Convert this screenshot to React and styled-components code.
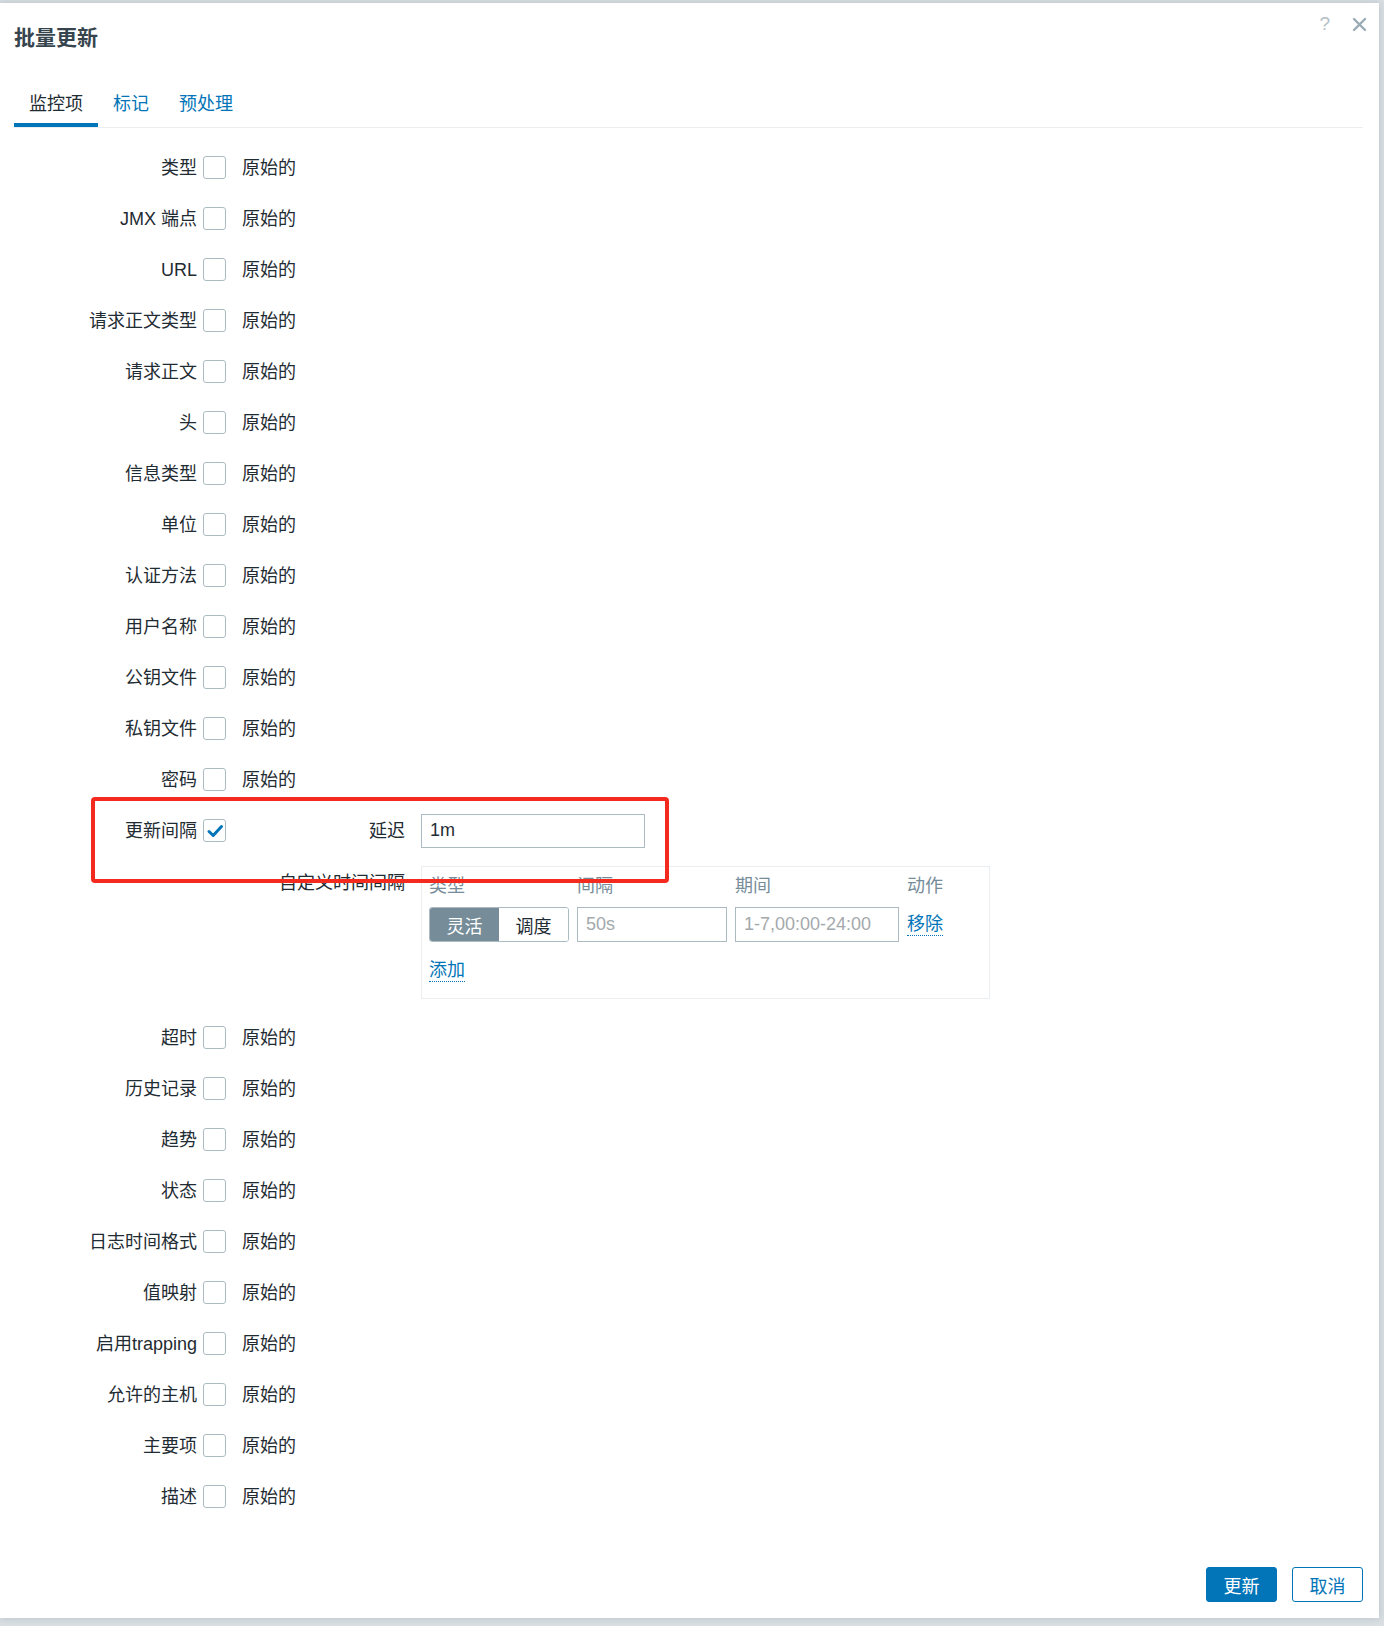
import React from 'react';
import styled, { createGlobalStyle } from 'styled-components';

const GlobalStyle = createGlobalStyle`
  html, body {
    margin: 0;
    padding: 0;
  }
  body {
    background: #d9dfe3;
    font-family: "Liberation Sans", "Noto Sans CJK SC", sans-serif;
    color: #1f2c33;
    min-height: 1626px;
  }
`;

const topFields = [
  '类型',
  'JMX 端点',
  'URL',
  '请求正文类型',
  '请求正文',
  '头',
  '信息类型',
  '单位',
  '认证方法',
  '用户名称',
  '公钥文件',
  '私钥文件',
  '密码',
];

const bottomFields = [
  '超时',
  '历史记录',
  '趋势',
  '状态',
  '日志时间格式',
  '值映射',
  '启用trapping',
  '允许的主机',
  '主要项',
  '描述',
];

export default function App() {
  return (
    <>
      <GlobalStyle />
      <Dialog>
        <HeadTools>
          <HelpMark>?</HelpMark>
          <CloseBtn aria-label="close">
            <svg width="15" height="15" viewBox="0 0 15 15">
              <path d="M2 2 L13 13 M13 2 L2 13" stroke="#9aabb5" strokeWidth="2.4" strokeLinecap="round" />
            </svg>
          </CloseBtn>
        </HeadTools>
        <Title>批量更新</Title>

        <TabList>
          <Tab active>监控项</Tab>
          <Tab>标记</Tab>
          <Tab>预处理</Tab>
        </TabList>

        <Form>
          {topFields.map((name) => (
            <FieldRow key={name}>
              <Label>{name}</Label>
              <Checkbox />
              <Value>原始的</Value>
            </FieldRow>
          ))}

          <UpdateRow>
            <LabelCell>
              <Label>更新间隔</Label>
            </LabelCell>
            <LabelCell>
              <Checkbox checked>
                <svg width="18" height="18" viewBox="0 0 18 18">
                  <path d="M3 9.5 L7.2 13.5 L15.5 4.5" fill="none" stroke="#0275b8" strokeWidth="3" strokeLinecap="round" strokeLinejoin="round" />
                </svg>
              </Checkbox>
            </LabelCell>
            <SubGrid>
              <SubLabel>延迟</SubLabel>
              <DelayInput defaultValue="1m" />
              <SubLabel top>自定义时间间隔</SubLabel>
              <IntervalBox>
                <IntervalGrid>
                  <ColHead>类型</ColHead>
                  <ColHead>间隔</ColHead>
                  <ColHead>期间</ColHead>
                  <ColHead>动作</ColHead>
                  <Segmented>
                    <Segment active>灵活</Segment>
                    <Segment>调度</Segment>
                  </Segmented>
                  <TextInput placeholder="50s" />
                  <TextInput placeholder="1-7,00:00-24:00" />
                  <LinkCell>
                    <LinkText>移除</LinkText>
                  </LinkCell>
                </IntervalGrid>
                <AddLine>
                  <LinkText>添加</LinkText>
                </AddLine>
              </IntervalBox>
            </SubGrid>
          </UpdateRow>

          {bottomFields.map((name) => (
            <FieldRow key={name}>
              <Label>{name}</Label>
              <Checkbox />
              <Value>原始的</Value>
            </FieldRow>
          ))}
        </Form>

        <Footer>
          <Button primary>更新</Button>
          <Button>取消</Button>
        </Footer>

        <Highlight />
      </Dialog>
    </>
  );
}

const Dialog = styled.div`
  position: relative;
  box-sizing: border-box;
  width: 1379px;
  margin-top: 3px;
  padding: 0 16px 16px 14px;
  background: #fff;
  box-shadow: 0 0 8px rgba(40, 60, 70, 0.18);
`;

const HeadTools = styled.div`
  position: absolute;
  top: 12px;
  right: 12px;
  display: flex;
  align-items: center;
  gap: 22px;
`;

const HelpMark = styled.span`
  font-size: 19px;
  line-height: 18px;
  color: #b3bfc6;
`;

const CloseBtn = styled.span`
  display: flex;
  width: 15px;
  height: 15px;
  margin-top: 1px;
`;

const Title = styled.h1`
  margin: 0;
  padding-top: 22px;
  font-size: 21px;
  line-height: 26px;
  font-weight: 700;
  color: #36444e;
`;

const TabList = styled.div`
  display: flex;
  margin-top: 41px;
  border-bottom: 1px solid #ebeef0;
`;

const Tab = styled.div`
  padding: 0 15px 7px;
  font-size: 18px;
  line-height: 24px;
  color: ${(p) => (p.active ? '#1f2c33' : '#0275b8')};
  border-bottom: 4px solid ${(p) => (p.active ? '#0275b8' : 'transparent')};
`;

const Form = styled.div`
  padding-top: 14px;
`;

const FieldRow = styled.div`
  display: grid;
  grid-template-columns: 183px 23px 1fr;
  column-gap: 6px;
  align-items: center;
  height: 51px;
`;

const Label = styled.div`
  text-align: right;
  font-size: 18px;
  line-height: 24px;
  color: #1f2c33;
  white-space: nowrap;
`;

const Checkbox = styled.div`
  box-sizing: border-box;
  width: 23px;
  height: 23px;
  border: 1px solid #acbbc2;
  border-radius: 3px;
  background: #fff;
  display: flex;
  align-items: center;
  justify-content: center;
`;

const Value = styled.div`
  margin-left: 10px;
  font-size: 18px;
  line-height: 24px;
  color: #1f2c33;
`;

const UpdateRow = styled.div`
  display: grid;
  grid-template-columns: 183px 23px 1fr;
  column-gap: 6px;
  align-items: start;
  margin-bottom: 13px;
`;

const LabelCell = styled.div`
  height: 51px;
  display: flex;
  align-items: center;
  justify-content: flex-end;
`;

const SubGrid = styled.div`
  margin-left: 10px;
  display: grid;
  grid-template-columns: 163px 1fr;
  grid-template-rows: 51px auto;
  column-gap: 16px;
  row-gap: 10px;
`;

const SubLabel = styled.div`
  text-align: right;
  font-size: 18px;
  line-height: 24px;
  color: #1f2c33;
  white-space: nowrap;
  align-self: ${(p) => (p.top ? 'start' : 'center')};
  padding-top: ${(p) => (p.top ? '5px' : '0')};
`;

const DelayInput = styled.input`
  align-self: center;
  box-sizing: border-box;
  width: 224px;
  height: 34px;
  padding: 0 8px;
  border: 1px solid #acbbc2;
  border-radius: 0;
  font-family: "Liberation Sans", "Noto Sans CJK SC", sans-serif;
  font-size: 18px;
  color: #1f2c33;
  outline: none;
`;

const IntervalBox = styled.div`
  box-sizing: border-box;
  width: 569px;
  padding: 7px 7px 16px;
  border: 1px solid #ebeef0;
`;

const IntervalGrid = styled.div`
  display: grid;
  grid-template-columns: 140px 150px 164px auto;
  grid-template-rows: 24px 35px;
  column-gap: 8px;
  row-gap: 9px;
`;

const ColHead = styled.div`
  font-size: 18px;
  line-height: 24px;
  color: #768d99;
`;

const Segmented = styled.div`
  box-sizing: border-box;
  display: flex;
  height: 35px;
  border: 1px solid #acbbc2;
  border-radius: 3px;
  overflow: hidden;
`;

const Segment = styled.div`
  flex: 1;
  display: flex;
  align-items: center;
  justify-content: center;
  font-size: 18px;
  color: ${(p) => (p.active ? '#fff' : '#1f2c33')};
  background: ${(p) => (p.active ? '#768d99' : '#fff')};
`;

const TextInput = styled.input`
  box-sizing: border-box;
  width: 100%;
  height: 35px;
  padding: 0 8px;
  border: 1px solid #acbbc2;
  border-radius: 0;
  font-family: "Liberation Sans", "Noto Sans CJK SC", sans-serif;
  font-size: 18px;
  color: #1f2c33;
  outline: none;
  &::placeholder {
    color: #a4a9ac;
  }
`;

const LinkCell = styled.div`
  display: flex;
  align-items: center;
`;

const LinkText = styled.span`
  font-size: 18px;
  line-height: 22px;
  color: #0275b8;
  border-bottom: 1px dotted #0275b8;
`;

const AddLine = styled.div`
  margin-top: 16px;
  height: 24px;
  display: flex;
  align-items: center;
`;

const Footer = styled.div`
  display: flex;
  justify-content: flex-end;
  gap: 15px;
  padding-top: 45px;
`;

const Button = styled.button`
  box-sizing: border-box;
  width: 71px;
  height: 35px;
  padding: 0;
  border: 1px solid #0275b8;
  border-radius: 3px;
  font-family: "Liberation Sans", "Noto Sans CJK SC", sans-serif;
  font-size: 18px;
  color: ${(p) => (p.primary ? '#fff' : '#0275b8')};
  background: ${(p) => (p.primary ? '#0275b8' : '#fff')};
`;

const Highlight = styled.div`
  position: absolute;
  left: 91px;
  top: 794px;
  width: 578px;
  height: 86px;
  box-sizing: border-box;
  border: 4px solid #f52a1f;
  border-radius: 4px;
  pointer-events: none;
`;
